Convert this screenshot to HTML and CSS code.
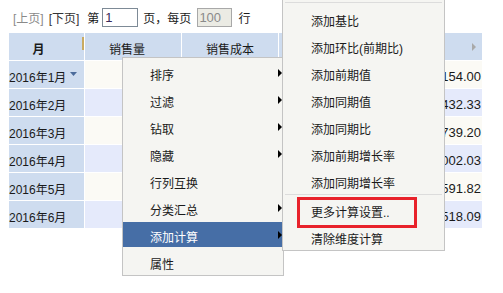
FILE: index.html
```html
<!DOCTYPE html>
<html>
<head>
<meta charset="utf-8">
<link rel="stylesheet" href="styles.css">
</head>
<body>
<div class="page">
  <div class="toolbar">
    <span class="pg pg-off">[上页]</span>
    <span class="pg pg-next">[下页]</span>
    <span class="lbl-di">第</span>
    <input class="pgin pgin-cur" value="1">
    <span class="lbl-per">页，每页</span>
    <input class="pgin pgin-ro" value="100" readonly>
    <span class="lbl-row">行</span>
  </div>

  <div class="grid">
    <div class="hd hd-month">月<span class="grip"></span></div>
    <div class="hd hd-c2">销售量</div>
    <div class="hd">销售成本</div>
    <div class="hd hd-last"><span class="hd-arrow"></span></div>

    <div class="dim">2016年1月<svg class="sort" width="7" height="4" viewBox="0 0 7 4"><polygon points="0,0 7,0 3.5,4" fill="#4b6b9b"/></svg></div>
    <div class="c odd"></div><div class="c odd"></div><div class="c odd num">86,154.00</div>

    <div class="dim">2016年2月</div>
    <div class="c even"></div><div class="c even"></div><div class="c even num">73,432.33</div>

    <div class="dim">2016年3月</div>
    <div class="c odd"></div><div class="c odd"></div><div class="c odd num">91,739.20</div>

    <div class="dim">2016年4月</div>
    <div class="c even"></div><div class="c even"></div><div class="c even num">88,002.03</div>

    <div class="dim">2016年5月</div>
    <div class="c odd"></div><div class="c odd"></div><div class="c odd num">95,591.82</div>

    <div class="dim">2016年6月</div>
    <div class="c even"></div><div class="c even"></div><div class="c even num">102,518.09</div>
  </div>

  <div class="menu menu-main">
    <div class="mi">排序<span class="arr"></span></div>
    <div class="mi">过滤<span class="arr"></span></div>
    <div class="mi">钻取<span class="arr"></span></div>
    <div class="mi">隐藏<span class="arr"></span></div>
    <div class="mi">行列互换</div>
    <div class="mi">分类汇总<span class="arr"></span></div>
    <div class="mi mi-active">添加计算<span class="arr"></span></div>
    <div class="mi">属性</div>
  </div>

  <div class="menu menu-sub">
    <div class="sep sep-top"></div>
    <div class="mi">添加基比</div>
    <div class="mi">添加环比(前期比)</div>
    <div class="mi">添加前期值</div>
    <div class="mi">添加同期值</div>
    <div class="mi">添加同期比</div>
    <div class="mi">添加前期增长率</div>
    <div class="mi">添加同期增长率</div>
    <div class="sep"></div>
    <div class="mi">更多计算设置..</div>
    <div class="mi">清除维度计算</div>
  </div>

  <div class="mark"></div>
</div>
</body>
</html>
```

FILE: styles.css
```css
* { box-sizing: border-box; }
html, body {
  margin: 0;
  padding: 0;
  background: #fff;
}
body {
  font-family: "Liberation Sans", "Noto Sans CJK SC", sans-serif;
  font-size: 12px;
  color: #1a1a1a;
}
.page {
  position: relative;
  width: 503px;
  height: 293px;
  overflow: hidden;
}

/* toolbar */
.toolbar {
  height: 33px;
  display: flex;
  align-items: center;
  padding-left: 13px;
  padding-top: 1px;
}
.pg-off { color: #8a8a8a; }
.pg-next { margin-left: 5px; color: #333; }
.lbl-di { margin-left: 8px; }
.pgin {
  font-family: "Liberation Sans", sans-serif;
  font-size: 13px;
  height: 19px;
  margin: 0;
  padding: 0 2px;
  border: 1px solid #7d8a96;
  outline: none;
}
.pgin-cur {
  width: 36px;
  margin-left: 3px;
  background: #fff;
  color: #3a2a5a;
}
.lbl-per { margin-left: 5px; }
.pgin-ro {
  width: 35px;
  margin-left: 6px;
  padding-left: 1px;
  background: #ebebe4;
  border-color: #a8a8a8;
  color: #8a8a8a;
}
.lbl-row { margin-left: 6px; }

/* grid table */
.grid {
  margin-left: 9px;
  display: grid;
  grid-template-columns: 75px 96px 96px 203px;
  grid-auto-rows: 27px;
  column-gap: 1px;
  row-gap: 1px;
  width: 473px;
}
.hd {
  background: #cedcef;
  display: flex;
  align-items: center;
  justify-content: center;
  padding-top: 3px;
  position: relative;
}
.hd-month {
  font-weight: bold;
  padding-right: 16px;
}
.grip {
  position: absolute;
  left: 73px;
  top: 4px;
  width: 2px;
  height: 13px;
  background: #c9ab62;
}
.hd-c2 { padding-right: 12px; }
.hd-last { justify-content: flex-end; padding-right: 6px; padding-top: 0; }
.hd-arrow {
  width: 0;
  height: 0;
  border-top: 4px solid transparent;
  border-bottom: 4px solid transparent;
  border-left: 4px solid #a9a9a9;
}
.dim {
  background: #cedcef;
  display: flex;
  align-items: center;
  padding-top: 3px;
  white-space: nowrap;
}
.sort { margin-left: 4px; margin-top: -5px; }
.c { display: flex; align-items: center; padding-top: 3px; }
.odd { background: #fbfaf5; }
.even { background: #e5eafb; }
.num {
  justify-content: flex-end;
  padding-right: 1px;
  font-size: 13px;
}

/* menus */
.menu {
  position: absolute;
  background: #f5f5f2;
  border: 1px solid #c4c4c4;
  display: flex;
  flex-direction: column;
}
.menu-main {
  left: 122px;
  top: 57px;
  width: 162px;
  padding: 2px 0 1px;
  row-gap: 2px;
}
.menu-sub {
  left: 282px;
  top: -1px;
  width: 163px;
  padding: 2px 1px 1px;
  row-gap: 2px;
}
.mi {
  height: 25px;
  display: flex;
  align-items: center;
  justify-content: space-between;
  padding: 4px 1px 0 27px;
  white-space: nowrap;
  color: #1a1a1a;
}
.menu-sub .mi { padding-left: 27px; }
.mi-active {
  background: #466ea6;
  color: #fff;
}
.arr {
  width: 0;
  height: 0;
  margin-top: -4px;
  border-top: 4px solid transparent;
  border-bottom: 4px solid transparent;
  border-left: 4px solid #000;
}
.sep {
  height: 1px;
  background: #dcdcdc;
  margin: 0 1px;
}
.sep-top { margin-bottom: 1px; }
.menu-sub .sep:not(.sep-top) { margin-top: -1px; }

.mark {
  position: absolute;
  left: 297px;
  top: 197px;
  width: 120px;
  height: 31px;
  border: 3px solid #e8222b;
}
```
